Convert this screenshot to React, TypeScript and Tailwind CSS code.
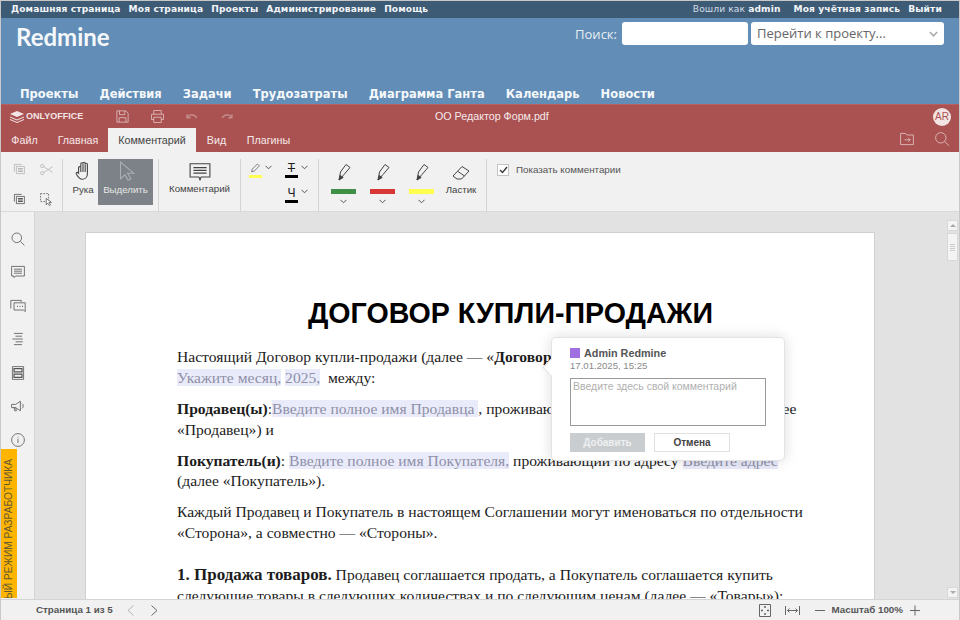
import type { ReactNode } from "react"

const chromeFont = "font-['Liberation_Sans',Arial,sans-serif]"
const redmineFont = "font-['DejaVu_Sans',Verdana,sans-serif]"

const topLinks = ["Домашняя страница", "Моя страница", "Проекты", "Администрирование", "Помощь"]
const mainLinks = ["Проекты", "Действия", "Задачи", "Трудозатраты", "Диаграмма Ганта", "Календарь", "Новости"]
const tabs = [
  { label: "Файл", width: "w-[47px]" },
  { label: "Главная", width: "w-[60px]" },
  { label: "Комментарий", width: "w-[88px]" },
  { label: "Вид", width: "w-[41px]" },
  { label: "Плагины", width: "w-[63px]" },
]

function Icon({ size = 20, className, children }: { size?: number; className?: string; children: ReactNode }) {
  return (
    <svg
      width={size}
      height={size}
      viewBox="0 0 20 20"
      fill="none"
      stroke="currentColor"
      strokeWidth="1"
      className={className}
    >
      {children}
    </svg>
  )
}

function Chevron() {
  return (
    <svg width="7" height="5" viewBox="0 0 7 5" fill="none" stroke="#555" strokeWidth="1">
      <path d="M0.5 0.8 3.5 3.8 6.5 0.8" />
    </svg>
  )
}

function Divider() {
  return <div className="mx-[5px] h-[52px] w-px shrink-0 bg-[#d4d4d4]" />
}

function CopyIcon({ faded }: { faded?: boolean }) {
  return (
    <Icon size={16} className={faded ? "text-[#b5b5b5]" : "text-[#555]"}>
      <path d="M3 12V3h9" />
      <path d="M5.5 14.5v-9h10v9z" />
      <path d="M7.5 8.5h6M7.5 11.5h6" strokeWidth="2" />
    </Icon>
  )
}

function Pen({ color }: { color: string }) {
  return (
    <div className="flex w-[39px] flex-col items-center">
      <Icon size={20} className="text-[#444]">
        <path d="M5 18 6.500 10 12 2.500l4 3-6 7z" />
        <path d="M5 18l1.200-4.500 3 2z" fill="currentColor" />
      </Icon>
      <div className="mt-[7px] h-[5px] w-[25px]" style={{ backgroundColor: color }} />
      <div className="mt-[5px]">
        <Chevron />
      </div>
    </div>
  )
}

function SideIcon({ children }: { children: ReactNode }) {
  return (
    <div className="flex h-[33.500px] items-center justify-center text-[#555]">
      <Icon size={16}>{children}</Icon>
    </div>
  )
}

function Field({ children }: { children: ReactNode }) {
  return <span className="bg-[#e9ebfb] text-[#8f90a8]">{children}</span>
}

function Toolbar() {
  return (
    <div className={`flex h-[60px] shrink-0 items-start border-b border-[#dadada] bg-[#f1f1f1] pt-[7px] pl-[11px] ${chromeFont} text-[9.700px] text-[#444]`}>
      <div className="grid h-[52px] w-[45px] grid-cols-2 content-between gap-x-[9px] py-[3px]">
        <CopyIcon faded />
        <Icon size={16} className="text-[#b5b5b5]">
          <circle cx="4" cy="5" r="2" />
          <circle cx="4" cy="14" r="2" />
          <path d="M6 6 17 13M6 13 17 6" />
        </Icon>
        <CopyIcon />
        <Icon size={16} className="text-[#555]">
          <path d="M2 2h10v10H2z" strokeDasharray="2 1.500" />
          <path d="M9 8v8l2-2 2 3 1.500-1-2-3h3z" fill="#fff" />
        </Icon>
      </div>
      <Divider />
      <div className="flex h-[52px] w-[30px] flex-col items-center pt-[1px]">
        <Icon size={22} className="text-[#444]">
          <path d="M6 12V7a1 1 0 0 1 2 0V3.500a1 1 0 0 1 2 0V3a1 1 0 0 1 2 0v1a1 1 0 0 1 2 0v8.500c0 3-2 5-4.500 5S6 16.500 4 13c-.8-1.500.8-2.500 2-1z" />
          <path d="M8 7v4M10 3.500V11M12 4v7" />
        </Icon>
        <span className="mt-[1px]">Рука</span>
      </div>
      <div className="flex h-[46px] w-[55px] flex-col items-center bg-[#7c8287] pt-[1px] text-[#e8e8e8]">
        <Icon size={22} className="text-[#aab0b4]">
          <path d="M5 2v15l4-3.500 3 5 2.500-1.500-3-5H17z" />
        </Icon>
        <span className="mt-[1px]">Выделить</span>
      </div>
      <Divider />
      <div className="flex h-[52px] w-[71px] flex-col items-center pt-[2px]">
        <Icon size={22} className="text-[#444]">
          <path d="M1 2.500h18v12H11l-1 2.500-1-2.500H1z" />
          <path d="M4 6h12M4 8.500h12M4 11h12" />
        </Icon>
        <span className="mt-[-1px]">Комментарий</span>
      </div>
      <Divider />
      <div className="grid w-[67px] grid-cols-2 pt-[3px] pl-[3px]">
        <div className="flex h-[24px] items-start gap-[3px]">
          <div className="flex flex-col items-center">
            <Icon size={13} className="text-[#444]">
              <path d="M4 15 5 11 13 3l3 3-8 8z" />
            </Icon>
            <div className="h-[3px] w-[13px] bg-[#ffff4d]" />
          </div>
          <div className="pt-[3px]">
            <Chevron />
          </div>
        </div>
        <div className="ml-[4px] flex h-[24px] items-start gap-[3px]">
          <div className="flex w-[13px] flex-col items-center text-[12px] leading-[13px] text-[#222]">
            <span className="line-through">Т</span>
            <div className="h-[3px] w-[13px] bg-black" />
          </div>
          <div className="pt-[3px]">
            <Chevron />
          </div>
        </div>
        <div />
        <div className="ml-[4px] flex h-[24px] items-start gap-[3px]">
          <div className="flex w-[13px] flex-col items-center text-[12px] leading-[14px] text-[#222]">
            <span>Ч</span>
            <div className="h-[3px] w-[13px] bg-black" />
          </div>
          <div className="pt-[3px]">
            <Chevron />
          </div>
        </div>
      </div>
      <Divider />
      <div className="flex pt-[3px]">
        <Pen color="#3f8f47" />
        <Pen color="#d93636" />
        <Pen color="#ffff4d" />
        <div className="flex w-[40px] flex-col items-center">
          <Icon size={20} className="text-[#444]">
            <path d="M2 14 11 4.500l7 4.500-7.500 8H6z" />
            <path d="M7 9.500 13.500 14" />
          </Icon>
          <span className="mt-[1px]">Ластик</span>
        </div>
      </div>
      <Divider />
      <div className="flex items-center gap-[7px] pt-[4px] pl-[5px]">
        <div className="flex h-[12px] w-[12px] items-center justify-center border border-[#c4c4c4] bg-white">
          <svg width="9" height="8" viewBox="0 0 9 8" fill="none" stroke="#333" strokeWidth="1.300">
            <path d="M1 4l2.500 2.500L8 1" />
          </svg>
        </div>
        <span className="text-[9.800px] text-[#555]">Показать комментарии</span>
      </div>
    </div>
  )
}

function CommentPopover() {
  return (
    <div className={`absolute top-[125px] left-[550px] h-[124px] w-[234px] rounded-[5px] border border-[#e3e3e3] bg-white px-[18px] pt-[8px] shadow-[0_0_14px_rgba(0,0,0,0.14)] ${chromeFont}`}>
      <div className="absolute top-[23px] left-[-7px] h-[13px] w-[13px] rotate-45 border-b border-l border-[#e3e3e3] bg-white" />
      <div className="flex h-[14px] items-center gap-[4px] text-[10.800px] font-bold text-[#555]">
        <div className="h-[10px] w-[10px] bg-[#a06fe0]" />
        Admin Redmine
      </div>
      <div className="text-[9.600px] leading-[12px] text-[#8a8a8a]">17.01.2025, 15:25</div>
      <div className="mt-[6px] h-[48px] w-[196px] border border-[#9a9a9a] px-[2px] text-[10.500px] leading-[14px] text-[#b0b0b0]">
        Введите здесь свой комментарий
      </div>
      <div className="mt-[7px] flex gap-[9px] text-[10px] font-bold">
        <div className="flex h-[19px] w-[75px] items-center justify-center bg-[#c9cdd0] text-[#eef0f1]">Добавить</div>
        <div className="flex h-[19px] w-[76px] items-center justify-center border border-[#e0e0e0] text-[#444]">Отмена</div>
      </div>
    </div>
  )
}

function PageBody() {
  return (
    <div className="mt-[20px] ml-[50px] h-[400px] w-[790px] overflow-hidden border border-[#d0d0d0] border-b-0 bg-white pt-[63px] pl-[91px] font-['Liberation_Serif','Times_New_Roman',serif] text-[15.600px] leading-[21px] text-[#1c1c1c]">
      <h1 className="-ml-[91px] w-[788px] pl-[61px] text-center font-['Liberation_Sans',Arial,sans-serif] text-[28.600px] leading-[34px] font-bold text-black">
        ДОГОВОР КУПЛИ-ПРОДАЖИ
      </h1>
      <div className="mt-[16px] whitespace-nowrap">
        <p>
          Настоящий Договор купли-продажи (далее — «<b>Договор</b>»)
        </p>
        <p>
          <Field>Укажите месяц,</Field> <Field>2025,</Field> &nbsp;между:
        </p>
        <p className="mt-[10px]">
          <b>Продавец(ы)</b>:<Field>Введите полное имя Продавца </Field> , проживающий по адресу Введите адрес (далее
        </p>
        <p>«Продавец») и</p>
        <p className="mt-[10px]">
          <b>Покупатель(и)</b>: <Field>Введите полное имя Покупателя,</Field> проживающий по адресу{" "}
          <Field>Введите адрес</Field>
        </p>
        <p className="-mt-px">(далее «Покупатель»).</p>
        <p className="mt-[10px]">Каждый Продавец и Покупатель в настоящем Соглашении могут именоваться по отдельности</p>
        <p>«Сторона», а совместно — «Стороны».</p>
        <p className="mt-[21px]">
          <b className="text-[17px]">1. Продажа товаров.</b> Продавец соглашается продать, а Покупатель соглашается купить
        </p>
        <p>следующие товары в следующих количествах и по следующим ценам (далее — «Товары»):</p>
      </div>
    </div>
  )
}

function StatusBar() {
  return (
    <div className={`flex h-[21px] shrink-0 items-center border-t border-[#d4d4d4] bg-[#f1f1f1] ${chromeFont} text-[9.800px] font-bold text-[#555]`}>
      <span className="ml-[35px]">Страница 1 из 5</span>
      <svg className="ml-[13px]" width="9" height="11" viewBox="0 0 9 11" fill="none" stroke="#b5b5b5">
        <path d="M7.500 .5 2 5.500l5.500 5" />
      </svg>
      <svg className="ml-[15px]" width="9" height="11" viewBox="0 0 9 11" fill="none" stroke="#666">
        <path d="M1.500 .5 7 5.500l-5.500 5" />
      </svg>
      <div className="flex-1" />
      <svg width="12" height="13" viewBox="0 0 12 13" fill="none" stroke="#666">
        <path d="M.5 .5h11v12H.5z" />
        <path d="M6 2v2M6 9v2M2 6.500h2M8 6.500h2" strokeWidth="1.500" />
      </svg>
      <svg className="ml-[14px]" width="15" height="9" viewBox="0 0 15 9" fill="none" stroke="#666">
        <path d="M.5 0v9M14.500 0v9M2.500 4.500h10M4.500 2.500l-2 2 2 2M10.500 2.500l2 2-2 2" />
      </svg>
      <div className="ml-[15px] h-px w-[10px] bg-[#666]" />
      <span className="ml-[7px]">Масштаб 100%</span>
      <svg className="ml-[7px]" width="11" height="11" viewBox="0 0 11 11" stroke="#666">
        <path d="M0 5.500h10M5 .5v10" />
      </svg>
      <div className="w-[38px]" />
    </div>
  )
}

export default function App() {
  return (
    <div className="flex h-[620px] w-[960px] flex-col overflow-hidden border border-b-0 border-[#c8c8c8] bg-white">
      <div className={`flex h-[17px] shrink-0 items-center justify-between bg-[#3e5b76] pr-[17px] pl-[10px] ${redmineFont} text-[9.100px] font-bold tracking-[0.12px] text-[#f2f5f8]`}>
        <div className="flex gap-[8px]">
          {topLinks.map((link) => (
            <span key={link}>{link}</span>
          ))}
        </div>
        <div className="flex">
          <span className="font-normal text-[#d5dee7]">
            Вошли как <b className="text-[#f2f5f8]">admin</b>
          </span>
          <span className="ml-[13px]">Моя учётная запись</span>
          <span className="ml-[8px]">Выйти</span>
        </div>
      </div>

      <div className={`flex h-[86px] shrink-0 flex-col bg-[#628db6] ${redmineFont}`}>
        <div className="flex h-[30px] items-start justify-between pt-[4px] pr-[15px] pl-[15px]">
          <span className="pt-[1px] font-['Lato',sans-serif] text-[24px] leading-[28px] font-bold text-[#f5f8fb]">Redmine</span>
          <div className="flex items-center text-[13px]">
            <span className="mt-[2px] mr-[5px] font-['Open_Sans',sans-serif] text-[#e8eef4]">Поиск:</span>
            <div className="h-[23px] w-[126px] rounded-[3px] bg-white" />
            <div className="ml-[3px] flex h-[23px] w-[193px] items-center justify-between rounded-[3px] bg-white pr-[6px] pl-[6px] font-['Open_Sans',sans-serif] text-[#666]">
              Перейти к проекту...
              <svg width="9" height="6" viewBox="0 0 9 6" fill="none" stroke="#aaa" strokeWidth="1.500">
                <path d="M.8 1 4.500 4.800 8.200 1" />
              </svg>
            </div>
          </div>
        </div>
        <div className="mt-auto flex gap-[21px] pb-[2px] pl-[19px] text-[11.500px] leading-[16px] font-bold text-[#f5f8fb]">
          {mainLinks.map((link) => (
            <span key={link}>{link}</span>
          ))}
        </div>
      </div>

      <div className={`h-[48px] shrink-0 border-t border-[#b9605f] bg-[#aa5252] ${chromeFont} text-[#f6e9e9]`}>
        <div className="relative flex h-[23px] items-center">
          <div className="ml-[9px] flex items-center gap-[2px] text-[#f4e6e6]">
            <svg width="14" height="12" viewBox="0 0 14 12" fill="currentColor">
              <path d="M7 0 14 3 7 6 0 3zM0 5.500l7 3 7-3v1l-7 3-7-3zM0 8l7 3 7-3v1l-7 3-7-3z" />
            </svg>
            <span className="text-[9px] font-bold">ONLYOFFICE</span>
          </div>
          <Icon size={15} className="ml-[32px] text-[#e5c9c9]">
            <path d="M2.500 2.500h12l3 3v12h-15z" />
            <path d="M6 2.500v5h7v-5M5.500 17.500v-6h9v6" />
          </Icon>
          <Icon size={15} className="ml-[20px] text-[#e5c9c9]">
            <path d="M5 7V2h10v5M5 14H2V7h16v7h-3" />
            <path d="M5 11h10v7H5z" />
          </Icon>
          <Icon size={14} className="ml-[20px] text-[#c48b8b]">
            <path d="M3 11c3-5 9-6 14 0M3 6v5h5" strokeWidth="2" />
          </Icon>
          <Icon size={14} className="ml-[21px] text-[#c48b8b]">
            <path d="M17 11c-3-5-9-6-14 0M17 6v5h-5" strokeWidth="2" />
          </Icon>
          <span className="absolute left-[434px] text-[10.700px] text-[#f6e9e9]">ОО Редактор Форм.pdf</span>
          <div className="absolute left-[932px] flex h-[18px] w-[18px] items-center justify-center rounded-full bg-[#f3e4e4] text-[10px] text-[#aa5252]">
            AR
          </div>
        </div>
        <div className="flex h-[24px] items-stretch text-[10.700px]">
          {tabs.map((tab) => (
            <div
              key={tab.label}
              className={`flex items-center justify-center ${tab.width} ${tab.label === "Комментарий" ? "bg-[#f1f1f1] text-[#444]" : ""}`}
            >
              {tab.label}
            </div>
          ))}
          <div className="flex-1" />
          <Icon size={16} className="mt-[3px] text-[#e5c9c9]">
            <path d="M2 17V3h6l2 2h8v12z" />
            <path d="M7 11h7M11.500 8.500 14 11l-2.500 2.500" />
          </Icon>
          <Icon size={16} className="mt-[3px] mr-[9px] ml-[19px] text-[#e5c9c9]">
            <circle cx="8.500" cy="8.500" r="6.500" />
            <path d="M13 13l6 5.500" />
          </Icon>
        </div>
      </div>

      <Toolbar />

      <div className="relative flex min-h-0 flex-1 overflow-hidden">
        <div className="relative w-[34px] shrink-0 border-r border-[#d4d4d4] bg-[#f1f1f1] pt-[10px]">
          <SideIcon>
            <circle cx="8.500" cy="8.500" r="6" />
            <path d="M13 13l5 5" />
          </SideIcon>
          <SideIcon>
            <path d="M2 3h16v12H7l-2 2v-2H2z" />
            <path d="M5 6.500h10M5 9h10M5 11.500h10" />
          </SideIcon>
          <SideIcon>
            <path d="M1 13V3h13v2" />
            <path d="M5 6h14v11l-2-2H5z" />
            <path d="M9 10.500h1M12 10.500h1M15 10.500h1" strokeWidth="1.500" />
          </SideIcon>
          <SideIcon>
            <path d="M5 3h11M7 6.500h8M3 10h13M7 13.500h9M5 17h10" />
          </SideIcon>
          <SideIcon>
            <path d="M3 2h14v16H3z" />
            <path d="M5 4.500h10v4H5zM5 11.500h10v4H5z" strokeWidth="1.500" />
          </SideIcon>
          <SideIcon>
            <path d="M2 8h5l6-4v12l-6-4H2zM5 12l1 4h2l-1-4M15 7c2 1 2 5 0 6" />
          </SideIcon>
          <SideIcon>
            <circle cx="10" cy="10" r="8" />
            <path d="M10 8.500V14M10 6v1" />
          </SideIcon>
          <div className="absolute top-[237px] left-0 flex h-[149px] w-[16px] items-start justify-center overflow-hidden bg-[#ffb400] pt-[10px]">
            <span className={`rotate-180 whitespace-nowrap [writing-mode:vertical-rl] ${chromeFont} text-[10.200px] leading-[16px] text-[#665c33]`}>
              ОТЛАДОЧНЫЙ РЕЖИМ РАЗРАБОТЧИКА
            </span>
          </div>
        </div>

        <div className="relative min-w-0 flex-1 overflow-hidden bg-[#e2e2e2]">
          <PageBody />
          <div className="absolute top-[8px] right-[1px] flex h-[378px] w-[11px] flex-col justify-between">
            <div className="flex h-[11px] items-center justify-center border border-[#d8d8d8] bg-[#f4f4f4]">
              <div className="h-0 w-0 border-x-[3px] border-b-[3px] border-x-transparent border-b-[#aaa]" />
            </div>
            <div className="absolute top-[13px] flex h-[28px] w-[11px] flex-col items-center justify-center gap-[1px] border border-[#d8d8d8] bg-[#f4f4f4]">
              <div className="h-px w-[5px] bg-[#ccc]" />
              <div className="h-px w-[5px] bg-[#ccc]" />
              <div className="h-px w-[5px] bg-[#ccc]" />
              <div className="h-px w-[5px] bg-[#ccc]" />
            </div>
            <div className="flex h-[11px] items-center justify-center border border-[#d8d8d8] bg-[#f4f4f4]">
              <div className="h-0 w-0 border-x-[3px] border-t-[3px] border-x-transparent border-t-[#aaa]" />
            </div>
          </div>
        </div>
        <CommentPopover />
      </div>

      <StatusBar />
    </div>
  )
}
